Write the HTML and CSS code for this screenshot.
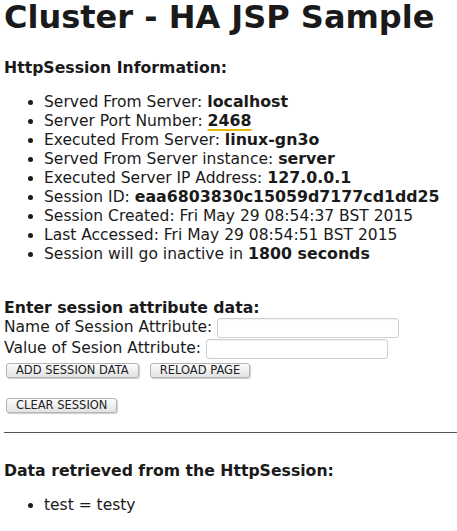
FILE: index.html
```html
<!DOCTYPE html>
<html>
<head>
<meta charset="utf-8">
<link rel="stylesheet" href="styles.css">
</head>
<body>
<h1 class="title">Cluster - HA JSP Sample</h1>
<h3 class="section">HttpSession Information:</h3>
<ul class="info">
  <li>Served From Server: <b>localhost</b></li>
  <li>Server Port Number: <b class="mark">2468</b></li>
  <li>Executed From Server: <b>linux-gn3o</b></li>
  <li>Served From Server instance: <b>server</b></li>
  <li>Executed Server IP Address: <b>127.0.0.1</b></li>
  <li>Session ID: <b>eaa6803830c15059d7177cd1dd25</b></li>
  <li>Session Created: Fri May 29 08:54:37 BST 2015</li>
  <li>Last Accessed: Fri May 29 08:54:51 BST 2015</li>
  <li>Session will go inactive in <b>1800 seconds</b></li>
</ul>
<form class="form">
  <div class="form-title">Enter session attribute data:</div>
  <div class="row">Name of Session Attribute: <input class="field" type="text"></div>
  <div class="row">Value of Sesion Attribute: <input class="field" type="text"></div>
  <div class="buttons">
    <button class="btn" type="button">ADD SESSION DATA</button>
    <button class="btn" type="button">RELOAD PAGE</button>
  </div>
  <div class="buttons clear">
    <button class="btn" type="button">CLEAR SESSION</button>
  </div>
</form>
<hr class="rule">
<h3 class="section data">Data retrieved from the HttpSession:</h3>
<ul class="info last">
  <li>test = testy</li>
</ul>
</body>
</html>
```
FILE: styles.css
```css
html, body {
  background: #fff;
}
body {
  margin: 0;
  padding: 0 0 0 4px;
  font-family: "DejaVu Sans", sans-serif;
  font-size: 15.5px;
  color: #1a1a1a;
}
b {
  font-size: 15.8px;
  line-height: 0;
}
.title {
  font-size: 32px;
  font-weight: bold;
  margin: 0;
  line-height: 34px;
}
.section {
  font-size: 15.7px;
  font-weight: bold;
  margin: 24px 0 0 0;
  line-height: 19px;
}
.info {
  margin: 16px 0 0 0;
  padding-left: 40px;
  line-height: 19px;
}
.info li {
  height: 19px;
}
.mark {
  text-decoration: underline;
  text-decoration-color: #e6b800;
  text-decoration-thickness: 2px;
  text-underline-offset: 3px;
}
.form {
  margin: 34px 0 0 0;
}
.form-title {
  font-size: 15.7px;
  font-weight: bold;
  line-height: 19px;
}
.row {
  line-height: 21px;
  height: 21px;
}
.field {
  width: 176px;
  height: 16px;
  border: 1px solid #cfcfcf;
  border-radius: 3px;
  padding: 1px 2px;
  margin: 0;
  vertical-align: middle;
  box-shadow: inset 0 1px 1px rgba(0,0,0,0.05);
}
.buttons {
  display: flex;
  gap: 11px;
  margin: 4px 0 0 2px;
}
.buttons.clear {
  margin-top: 20px;
}
.btn {
  font-family: "DejaVu Sans", sans-serif;
  font-size: 11.5px;
  color: #222;
  height: 15px;
  padding: 0 9px;
  border: 1px solid #b5b5b5;
  border-radius: 3px;
  background: linear-gradient(#fdfdfd, #e2e2e2);
  box-shadow: 1px 1px 1px rgba(0,0,0,0.2);
  line-height: 13px;
}
.rule {
  margin: 19px 0 0 0;
  border: 0;
  border-top: 1px solid #555;
  height: 0;
}
.section.data {
  margin-top: 28px;
}
.info.last {
  margin-top: 16px;
}
```
